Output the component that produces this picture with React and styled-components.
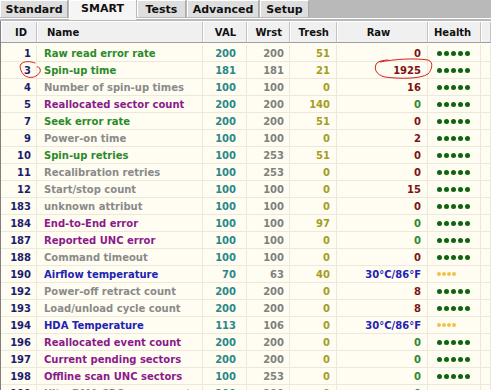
import styled, { createGlobalStyle } from "styled-components"

const Global = createGlobalStyle`
html, body { margin: 0; padding: 0; background: #b9b9b9; }
body { font-family: "DejaVu Sans", Verdana, sans-serif; }
`

const COLUNAS = "36px 166px 44px 43px 47px 91px 53px 1fr"

const cores = {
  verde: "#2b8a2b",
  cinza: "#8a8a8a",
  roxo: "#8b1a8b",
  azul: "#2222b4",
  vermelho: "#7c1212",
}

const Janela = styled.div`
position: relative;
width: 491px;
height: 390px;
overflow: hidden;
background: #b9b9b9;
`
const Abas = styled.div`
display: flex;
align-items: flex-start;
gap: 1px;
height: 18px;
border-bottom: 1px solid #ffffff;
`
const Aba = styled.div`
box-sizing: border-box;
flex: none;
width: ${p => p.$w}px;
height: ${p => (p.$ativa ? 20 : 17)}px;
display: flex;
align-items: ${p => (p.$ativa ? "flex-start" : "center")};
justify-content: center;
padding-top: ${p => (p.$ativa ? "1px" : "0")};
font-size: 11px;
font-weight: bold;
color: #111;
background: ${p => (p.$ativa ? "#f5f5f5" : "#dedede")};
border: 1px solid ${p => (p.$ativa ? "#f5f5f5" : "#a8a8a8")};
border-top-color: #ffffff;
border-left-color: #ffffff;
border-bottom: none;
z-index: ${p => (p.$ativa ? 1 : 0)};
`
const Tabela = styled.div`
margin-top: 2px;
border-left: 1px solid #808080;
`
const Cabecalho = styled.div`
display: grid;
grid-template-columns: ${COLUNAS};
height: 20px;
background: #f0f0f0;
border-top: 1px solid #ffffff;
border-bottom: 1px solid #a0a0a0;
`
const Titulo = styled.div`
display: flex;
align-items: center;
justify-content: ${p => p.$alinha || "flex-end"};
padding: 1px ${p => p.$pd || 7}px 0 ${p => p.$pe || 0}px;
font-size: 10px;
font-weight: bold;
color: #111;
border-right: 1px solid #c4c4c4;
box-shadow: inset 1px 0 #ffffff;
`
const Corpo = styled.div`
background: #fffdf2;
padding-top: 2px;
`
const Linha = styled.div`
display: grid;
grid-template-columns: ${COLUNAS};
height: 16px;
border-bottom: 1px solid #ece9dc;
`
const Celula = styled.div`
display: flex;
align-items: center;
justify-content: ${p => p.$alinha || "flex-end"};
padding: 0 ${p => p.$pd || 0}px 0 ${p => p.$pe || 0}px;
font-size: 10px;
font-weight: bold;
white-space: nowrap;
overflow: hidden;
color: ${p => p.$cor};
border-right: 1px solid #ece9dc;
`
const Pontos = styled.div`
display: flex;
align-items: center;
gap: ${p => (p.$amarelo ? 1 : 2)}px;
padding-left: 9px;
`
const Ponto = styled.span`
width: ${p => (p.$amarelo ? 4 : 5)}px;
height: ${p => (p.$amarelo ? 4 : 5)}px;
border-radius: 50%;
background: ${p => (p.$amarelo ? "#f2c14a" : "#0d650d")};
`
const Rabisco = styled.svg`
position: absolute;
left: 0;
top: 0;
pointer-events: none;
`

const abas = [
  ["Standard", 68],
  ["SMART", 67],
  ["Tests", 49],
  ["Advanced", 72],
  ["Setup", 49],
]

const T = "30°C/86°F"
const linhas = [
  [1, "Raw read error rate", "verde", 200, 200, 51, "0", "vermelho"],
  [3, "Spin-up time", "verde", 181, 181, 21, "1925", "vermelho"],
  [4, "Number of spin-up times", "cinza", 100, 100, 0, "16", "vermelho"],
  [5, "Reallocated sector count", "roxo", 200, 200, 140, "0", "verde"],
  [7, "Seek error rate", "verde", 200, 200, 51, "0", "vermelho"],
  [9, "Power-on time", "cinza", 100, 100, 0, "2", "vermelho"],
  [10, "Spin-up retries", "verde", 100, 253, 51, "0", "vermelho"],
  [11, "Recalibration retries", "cinza", 100, 253, 0, "0", "vermelho"],
  [12, "Start/stop count", "cinza", 100, 100, 0, "15", "vermelho"],
  [183, "unknown attribut", "cinza", 100, 100, 0, "0", "vermelho"],
  [184, "End-to-End error", "roxo", 100, 100, 97, "0", "verde"],
  [187, "Reported UNC error", "roxo", 100, 100, 0, "0", "verde"],
  [188, "Command timeout", "cinza", 100, 100, 0, "0", "vermelho"],
  [190, "Airflow temperature", "azul", 70, 63, 40, T, "azul"],
  [192, "Power-off retract count", "cinza", 200, 200, 0, "8", "vermelho"],
  [193, "Load/unload cycle count", "cinza", 200, 200, 0, "8", "vermelho"],
  [194, "HDA Temperature", "azul", 113, 106, 0, T, "azul"],
  [196, "Reallocated event count", "roxo", 200, 200, 0, "0", "verde"],
  [197, "Current pending sectors", "roxo", 200, 200, 0, "0", "verde"],
  [198, "Offline scan UNC sectors", "roxo", 100, 253, 0, "0", "verde"],
  [199, "UltraDMA CRC error count", "cinza", 200, 200, 0, "0", "verde"],
]

function Saude({ temp }) {
  const n = temp ? 4 : 5
  return (
    <Pontos $amarelo={temp}>
      {Array.from({ length: n }, (_, i) => <Ponto key={i} $amarelo={temp} />)}
    </Pontos>
  )
}

export default function App() {
  return (
    <Janela>
      <Global />
      <Abas>
        {abas.map(([nome, w]) => (
          <Aba key={nome} $w={w} $ativa={nome === "SMART"}>{nome}</Aba>
        ))}
      </Abas>
      <Tabela>
        <Cabecalho>
          <Titulo $pd={9}>ID</Titulo>
          <Titulo $alinha="flex-start" $pe={10}>Name</Titulo>
          <Titulo $pd={10}>VAL</Titulo>
          <Titulo>Wrst</Titulo>
          <Titulo>Tresh</Titulo>
          <Titulo $alinha="center">Raw</Titulo>
          <Titulo $alinha="flex-start" $pe={6}>Health</Titulo>
          <Titulo />
        </Cabecalho>
        <Corpo>
          {linhas.map(([id, nome, cor, val, wrst, tresh, raw, corRaw]) => (
            <Linha key={id}>
              <Celula $cor="#1c1c6c" $pd={5}>{id}</Celula>
              <Celula $cor={cores[cor]} $alinha="flex-start" $pe={7}>{nome}</Celula>
              <Celula $cor="#2a8888" $pd={10}>{val}</Celula>
              <Celula $cor="#808080" $pd={5}>{wrst}</Celula>
              <Celula $cor="#a39d1f" $pd={6}>{tresh}</Celula>
              <Celula $cor={cores[corRaw]} $pd={6}>{raw}</Celula>
              <Celula $alinha="flex-start"><Saude temp={raw === T} /></Celula>
              <Celula />
            </Linha>
          ))}
        </Corpo>
      </Tabela>
      <Rabisco width="491" height="390" viewBox="0 0 491 390">
        <g fill="none" stroke="#d42020" strokeWidth="1" strokeLinecap="round">
          <path d="M35 63 C30 61 24 61 21 64 C19 67 21 72 24 75 C27 78 33 78 36 76 C39 74 41 72 40 69 C39 67 38 66 37 67" />
          <path d="M380 62 C395 59 415 58 428 60 C434 62 432 70 428 74 C420 79 400 79 385 77 C376 75 373 68 377 63 C379 61 384 60 388 60" />
        </g>
      </Rabisco>
    </Janela>
  )
}
